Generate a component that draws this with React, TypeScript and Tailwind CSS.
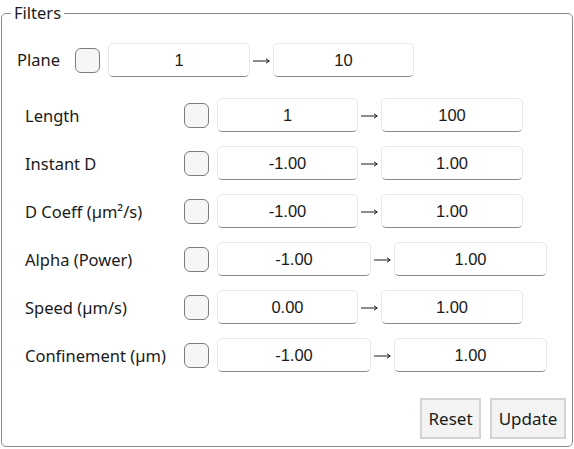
import React from "react";

const font = { fontFamily: '"Noto Sans", "Open Sans", sans-serif' };

function Box({ value, w }: { value: string; w: string }) {
  return (
    <div
      className={`${w} h-[34px] flex items-center justify-center bg-white rounded-[5px] border border-[#e8e8e8] border-b-[#8a8a8a] text-[16.5px] text-[#1a1a1a] font-['Liberation_Sans',Arial,sans-serif]`}
    >
      {value}
    </div>
  );
}

function Check() {
  return <div className="w-[25px] h-[25px] shrink-0 rounded-[6px] border-[1.5px] border-[#7d7d7d] bg-[#f6f6f6]" />;
}

function Arrow() {
  return (
    <div className="w-[23px] flex items-center justify-center">
      <svg width="17" height="8" viewBox="0 0 17 8" className="mt-[1px]">
        <line x1="0" y1="4" x2="16" y2="4" stroke="#1a1a1a" strokeWidth="1" />
        <path d="M13 1.8 L16.3 4 L13 6.2" fill="none" stroke="#1a1a1a" strokeWidth="1" />
      </svg>
    </div>
  );
}

type Row = { label: string; a: string; b: string; wide?: boolean };

const rows: Row[] = [
  { label: "Length", a: "1", b: "100" },
  { label: "Instant D", a: "-1.00", b: "1.00" },
  { label: "D Coeff (µm²/s)", a: "-1.00", b: "1.00" },
  { label: "Alpha (Power)", a: "-1.00", b: "1.00", wide: true },
  { label: "Speed (µm/s)", a: "0.00", b: "1.00" },
  { label: "Confinement (µm)", a: "-1.00", b: "1.00", wide: true },
];

export default function App() {
  return (
    <div className="w-[574px] h-[449px] bg-white text-[#1a1a1a]" style={font}>
      <fieldset className="mx-[1px] w-[572px] h-[447px] border-[1.5px] border-[#8a8a8a] rounded-[5px] px-0 pb-0">
        <legend className="ml-[9px] px-[3px] text-[16.5px] leading-[26px]">Filters</legend>
        <div className="flex items-center h-[34px] mt-[17px] pl-[15px]">
          <div className="w-[58px] text-[16.5px]">Plane</div>
          <Check />
          <div className="w-[8px]" />
          <Box value="1" w="w-[142px]" />
          <Arrow />
          <Box value="10" w="w-[141px]" />
        </div>
        <div className="flex flex-col gap-[14px] mt-[21px] pl-[23px]">
          {rows.map((r, i) => (
            <div key={i} className="flex items-center h-[34px]">
              <div className="w-[159px] text-[16.5px] whitespace-nowrap pt-[2px]">{r.label}</div>
              <Check />
              <div className="w-[8px]" />
              <Box value={r.a} w={r.wide ? "w-[154px]" : "w-[141px]"} />
              <Arrow />
              <Box value={r.b} w={r.wide ? "w-[153px]" : "w-[142px]"} />
            </div>
          ))}
        </div>
        <div className="flex justify-end gap-[9px] mt-[26px] pr-[6px]">
          <button className="w-[61px] h-[41px] bg-[#f3f3f3] border-2 border-[#d4d4d4] text-[17px]">Reset</button>
          <button className="w-[76px] h-[41px] bg-[#f3f3f3] border-2 border-[#d4d4d4] text-[17px]">Update</button>
        </div>
      </fieldset>
    </div>
  );
}
